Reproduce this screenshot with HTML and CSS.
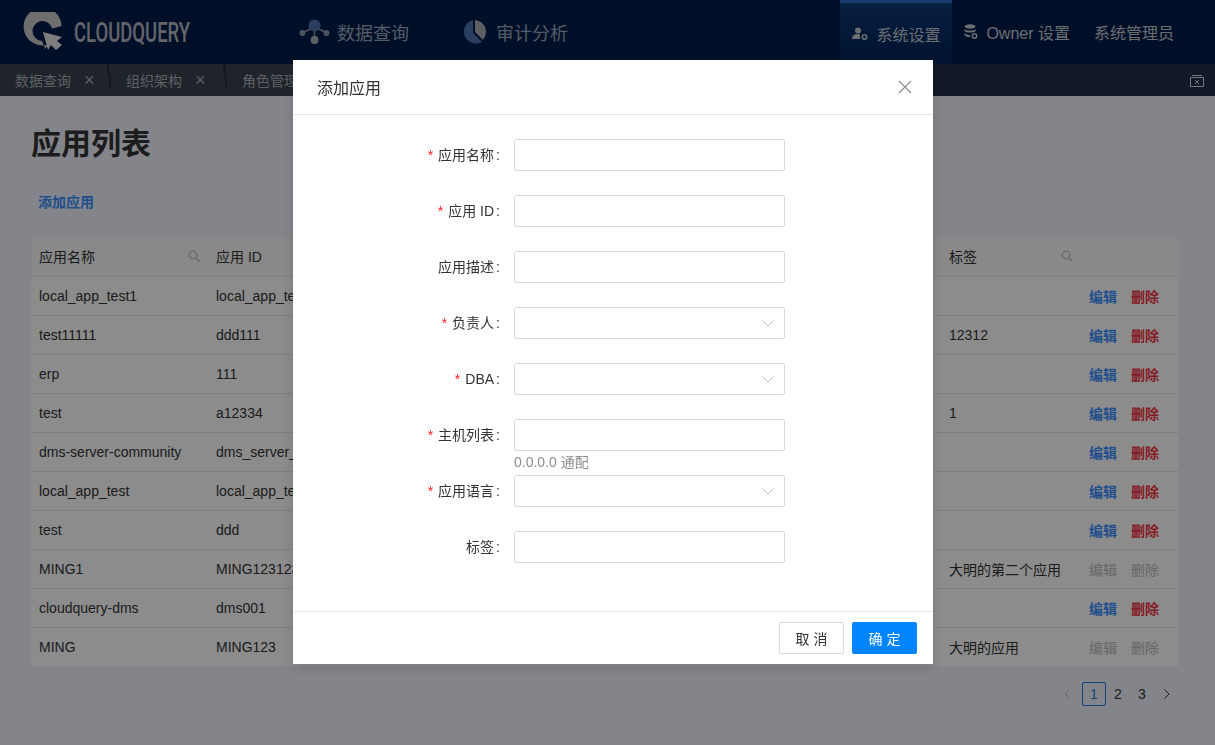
FILE: index.html
```html
<!DOCTYPE html>
<html lang="zh-CN">
<head>
  <meta charset="UTF-8">
  <title>应用列表 - CloudQuery</title>
  <link rel="stylesheet" href="styles.css">
</head>
<body>
  <header class="topbar">
    <div class="brand">
      <svg class="brand-icon" width="40" height="40" viewBox="0 0 40 40">
        <path d="M33 28 A19 19 0 1 1 38.6 14 L29.2 16.6 A10 10 0 1 0 19 29 L22 36 A19 19 0 0 1 20 38" fill="#c9c9c9"/>
        <path d="M20 20 L39 25 L34 29 L39 33 L33 38 L28 33 L25 38 Z" fill="#e4e4e4"/>
      </svg>
      <span class="brand-name">CLOUDQUERY</span>
    </div>
    <nav class="main-nav">
      <a class="main-link">
        <svg width="31" height="26" viewBox="0 0 31 26">
          <path d="M15.5 8 L5 13 M15.5 8 L26 13 M15.5 8 V20" stroke="#8b97ab" stroke-width="1.5"/>
          <circle cx="15.5" cy="6.5" r="6" fill="#4d74ad"/>
          <circle cx="3.5" cy="14" r="3" fill="#8b97ab"/>
          <circle cx="27.5" cy="14" r="3" fill="#8b97ab"/>
          <circle cx="15.5" cy="21" r="4" fill="#a9adb5"/>
        </svg>
        数据查询
      </a>
      <a class="main-link">
        <svg width="26" height="26" viewBox="0 0 26 26">
          <path d="M12 1 V14 L21 23 A12 12 0 1 1 12 1 Z" fill="#4d74ad"/>
          <path d="M14 1 A12 12 0 0 1 25 13 A12 12 0 0 1 22 21 L14 13 Z" fill="#a9adb5"/>
        </svg>
        审计分析
      </a>
    </nav>
    <nav class="side-nav">
      <a class="side-link is-active">
        <svg width="16" height="14" viewBox="0 0 16 14">
          <circle cx="6" cy="3.5" r="3" fill="#c3c7ce"/>
          <path d="M0 12 C0 8 3 7 6 7 C7.5 7 8 7.5 8 8 V12 Z" fill="#c3c7ce"/>
          <circle cx="12.5" cy="10" r="2.2" fill="none" stroke="#c3c7ce" stroke-width="1.6"/>
        </svg>
        系统设置
      </a>
      <a class="side-link">
        <svg width="14" height="16" viewBox="0 0 14 16">
          <ellipse cx="6" cy="2.5" rx="5.5" ry="2.2" fill="#c3c7ce"/>
          <path d="M.5 5 C2 7 10 7 11.5 5 V7 C10 9 2 9 .5 7 Z M.5 9 C2 11 5 11 6 11 V13 C4 13 2 13 .5 11 Z" fill="#c3c7ce"/>
          <circle cx="10.5" cy="12" r="2.2" fill="none" stroke="#c3c7ce" stroke-width="1.6"/>
        </svg>
        Owner 设置
      </a>
      <a class="side-link">系统管理员</a>
    </nav>
  </header>

  <div class="tabbar">
    <div class="tab">数据查询<span class="tab-x">×</span></div>
    <div class="tab">组织架构<span class="tab-x">×</span></div>
    <div class="tab tab-last">角色管理<span class="tab-x">×</span></div>
    <svg class="tab-close" width="14" height="13" viewBox="0 0 14 13">
      <path d="M2 1.5 H12 M.5 3.5 H13.5 V12.5 H.5 Z M5 6 L9 10 M9 6 L5 10" fill="none" stroke="#d5d9e0"/>
    </svg>
  </div>

  <main class="page">
    <h1 class="page-title">应用列表</h1>
    <a class="add-link">添加应用</a>
    <table class="app-table">
      <colgroup>
        <col class="col-name">
        <col class="col-id">
        <col>
        <col class="col-tag">
        <col class="col-actions">
      </colgroup>
      <thead>
        <tr>
          <th>应用名称<svg class="search-icon" width="12" height="12" viewBox="0 0 12 12"><circle cx="5" cy="5" r="3.8" fill="none" stroke="#bbb" stroke-width="1.2"/><path d="M8 8 L11.5 11.5" stroke="#bbb" stroke-width="1.4"/></svg></th>
          <th>应用 ID</th>
          <th></th>
          <th>标签<svg class="search-icon" width="12" height="12" viewBox="0 0 12 12"><circle cx="5" cy="5" r="3.8" fill="none" stroke="#bbb" stroke-width="1.2"/><path d="M8 8 L11.5 11.5" stroke="#bbb" stroke-width="1.4"/></svg></th>
          <th></th>
        </tr>
      </thead>
      <tbody>
        <tr><td>local_app_test1</td><td>local_app_test1</td><td></td><td></td><td><a class="act-edit">编辑</a><a class="act-del">删除</a></td></tr>
        <tr><td>test11111</td><td>ddd111</td><td></td><td>12312</td><td><a class="act-edit">编辑</a><a class="act-del">删除</a></td></tr>
        <tr><td>erp</td><td>111</td><td></td><td></td><td><a class="act-edit">编辑</a><a class="act-del">删除</a></td></tr>
        <tr><td>test</td><td>a12334</td><td></td><td>1</td><td><a class="act-edit">编辑</a><a class="act-del">删除</a></td></tr>
        <tr><td>dms-server-community</td><td>dms_server_community</td><td></td><td></td><td><a class="act-edit">编辑</a><a class="act-del">删除</a></td></tr>
        <tr><td>local_app_test</td><td>local_app_test</td><td></td><td></td><td><a class="act-edit">编辑</a><a class="act-del">删除</a></td></tr>
        <tr><td>test</td><td>ddd</td><td></td><td></td><td><a class="act-edit">编辑</a><a class="act-del">删除</a></td></tr>
        <tr><td>MING1</td><td>MING123123</td><td></td><td>大明的第二个应用</td><td><a class="act-off">编辑</a><a class="act-off">删除</a></td></tr>
        <tr><td>cloudquery-dms</td><td>dms001</td><td></td><td></td><td><a class="act-edit">编辑</a><a class="act-del">删除</a></td></tr>
        <tr><td>MING</td><td>MING123</td><td></td><td>大明的应用</td><td><a class="act-off">编辑</a><a class="act-off">删除</a></td></tr>
      </tbody>
    </table>
    <div class="pager">
      <svg class="pager-arrow is-off" width="8" height="10" viewBox="0 0 8 10"><path d="M6.5 .5 L2 5 L6.5 9.5" fill="none" stroke="currentColor"/></svg>
      <span class="pager-num is-current">1</span>
      <span class="pager-num">2</span>
      <span class="pager-num">3</span>
      <svg class="pager-arrow" width="8" height="10" viewBox="0 0 8 10"><path d="M1.5 .5 L6 5 L1.5 9.5" fill="none" stroke="currentColor"/></svg>
    </div>
  </main>

  <div class="mask">
    <div class="modal">
      <div class="modal-head">
        <span>添加应用</span>
        <svg width="14" height="14" viewBox="0 0 14 14"><path d="M1 1 L13 13 M13 1 L1 13" stroke="#8c8c8c" stroke-width="1.2"/></svg>
      </div>
      <form class="modal-body">
        <div class="field"><label class="is-required">应用名称</label><div class="control"><input type="text"></div></div>
        <div class="field"><label class="is-required">应用 ID</label><div class="control"><input type="text"></div></div>
        <div class="field"><label>应用描述</label><div class="control"><input type="text"></div></div>
        <div class="field"><label class="is-required">负责人</label><div class="control select"><svg width="12" height="7" viewBox="0 0 12 7"><path d="M.5 .5 L6 6 L11.5 .5" fill="none" stroke="#bfbfbf"/></svg></div></div>
        <div class="field"><label class="is-required">DBA</label><div class="control select"><svg width="12" height="7" viewBox="0 0 12 7"><path d="M.5 .5 L6 6 L11.5 .5" fill="none" stroke="#bfbfbf"/></svg></div></div>
        <div class="field"><label class="is-required">主机列表</label><div class="control"><input type="text"><p class="field-help">0.0.0.0 通配</p></div></div>
        <div class="field"><label class="is-required">应用语言</label><div class="control select"><svg width="12" height="7" viewBox="0 0 12 7"><path d="M.5 .5 L6 6 L11.5 .5" fill="none" stroke="#bfbfbf"/></svg></div></div>
        <div class="field"><label>标签</label><div class="control"><input type="text"></div></div>
      </form>
      <div class="modal-foot">
        <button class="btn" type="button">取 消</button>
        <button class="btn btn-primary" type="button">确 定</button>
      </div>
    </div>
  </div>
</body>
</html>
```

FILE: styles.css
```css
* {
  box-sizing: border-box;
  margin: 0;
  padding: 0;
}

html, body {
  height: 100%;
  overflow: hidden;
}

body {
  font-family: "Liberation Sans", "Noto Sans CJK SC", sans-serif;
  font-size: 14px;
  color: #333;
  background: #f0f3fb;
}

/* top bar */
.topbar {
  height: 64px;
  display: flex;
  background: #001d4a;
  color: #c3c7ce;
}

.brand {
  width: 299px;
  padding-left: 23px;
  display: flex;
  align-items: center;
}

.brand-icon {
  flex: none;
  margin-top: 0;
}

.brand-name {
  display: inline-block;
  width: 111px;
  margin-left: 11px;
  font-family: Roboto, sans-serif;
  font-size: 28px;
  font-weight: 500;
  color: #b4b9c0;
  transform: scaleX(.66);
  transform-origin: left center;
}

.main-nav {
  display: flex;
  gap: 52px;
}

.main-link {
  display: flex;
  align-items: center;
  gap: 7px;
  font-size: 18px;
  color: #9ba7bb;
}

.main-link + .main-link {
  gap: 9px;
}

.side-nav {
  margin-left: auto;
  margin-right: 30px;
  display: flex;
}

.side-link {
  display: flex;
  align-items: center;
  gap: 8px;
  padding: 0 12px;
  font-size: 16px;
}

.side-link.is-active {
  background: linear-gradient(#0f3a78, #002255);
  border-top: 3px solid #2f6fd0;
}

.side-link:last-child {
  padding-right: 11px;
}

/* tabs */
.tabbar {
  height: 32px;
  display: flex;
  align-items: center;
  background: #1f2d4a;
  color: #a8adb6;
}

.tab {
  height: 32px;
  display: flex;
  align-items: center;
  padding-left: 15px;
  width: 111px;
  background: #39434f;
  position: relative;
}

.tab + .tab {
  width: 116px;
  padding-left: 15px;
}

.tab-last {
  padding-left: 20px;
  width: 200px;
}

.tab::after {
  content: "";
  position: absolute;
  right: 0;
  top: 0;
  bottom: 0;
  width: 2px;
  background: #242b36;
  transform: skewX(8deg);
}

.tab-x {
  margin-left: 13px;
  font-size: 18px;
  font-weight: 300;
}

.tab-close {
  margin-left: auto;
  margin-right: 11px;
}

/* page */
.page {
  padding: 0 36px 0 31px;
}

.page-title {
  margin-top: 28px;
  font-size: 30px;
  line-height: 40px;
  font-weight: 700;
  color: #333;
}

.add-link {
  display: block;
  margin: 28px 0 0 7px;
  height: 20px;
  line-height: 20px;
  font-weight: 700;
  color: #3a8fff;
}

.app-table {
  width: 1148px;
  margin-top: 25px;
  table-layout: fixed;
  border-collapse: collapse;
  background: #fff;
}

.col-name,
.col-id {
  width: 177px;
}

.col-tag {
  width: 140px;
}

.col-actions {
  width: 98px;
}

.app-table th,
.app-table td {
  height: 39px;
  padding: 0 8px;
  text-align: left;
  font-weight: 400;
  white-space: nowrap;
  overflow: hidden;
  border-bottom: 1px solid #e8e8e8;
}

.app-table th {
  background: #fafafa;
  position: relative;
}

.app-table tr:last-child td {
  border-bottom: 0;
}

.search-icon {
  position: absolute;
  right: 8px;
  top: 13px;
}

.act-edit,
.act-del,
.act-off {
  font-weight: 700;
  margin-right: 14px;
}

.act-edit {
  color: #3a8fff;
}

.act-del {
  color: #f5303f;
}

.act-off {
  font-weight: 400;
  color: #bbb;
}

.pager {
  margin-top: 16px;
  display: flex;
  justify-content: flex-end;
  align-items: center;
  width: 1148px;
  padding-right: 8px;
  color: #333;
}

.pager-arrow {
  color: #333;
}

.pager-arrow.is-off {
  color: #bbb;
  margin-right: 11px;
}

.pager-num {
  width: 24px;
  height: 24px;
  line-height: 22px;
  text-align: center;
  border: 1px solid transparent;
  border-radius: 2px;
}

.pager-num.is-current {
  color: #1f7fe8;
  border-color: #1f7fe8;
}

.pager-num:nth-of-type(3) {
  margin-right: 9px;
}

/* modal */
.mask {
  position: fixed;
  inset: 0;
  background: rgba(0, 0, 0, .45);
}

.modal {
  width: 640px;
  height: 604px;
  margin: 60px 0 0 293px;
  background: #fff;
  display: flex;
  flex-direction: column;
  box-shadow: 0 4px 12px rgba(0, 0, 0, .15);
}

.modal-head {
  height: 55px;
  padding: 0 21px 0 24px;
  display: flex;
  align-items: center;
  justify-content: space-between;
  font-size: 16px;
  color: #333;
  border-bottom: 1px solid #e8e8e8;
}

.modal-body {
  flex: 1;
  padding-top: 24px;
}

.field {
  height: 56px;
  display: flex;
}

.field label {
  width: 214px;
  height: 32px;
  line-height: 32px;
  text-align: right;
  color: #333;
}

.field label::after {
  content: ":";
  margin: 0 7px 0 2px;
}

.is-required::before {
  content: "*";
  margin-right: 5px;
  color: #f5222d;
  font-family: "Liberation Sans", sans-serif;
}

.control {
  width: 271px;
  height: 32px;
  margin-left: 7px;
}

.control input {
  display: block;
  width: 100%;
  height: 32px;
  border: 1px solid #d9d9d9;
  border-radius: 2px;
  background: #fff;
}

.select {
  border: 1px solid #d9d9d9;
  border-radius: 2px;
  display: flex;
  align-items: center;
  justify-content: flex-end;
  padding-right: 10px;
}

.field-help {
  line-height: 22px;
  color: #8c8c8c;
}

.modal-foot {
  height: 53px;
  padding: 10px 16px 0 0;
  display: flex;
  justify-content: flex-end;
  gap: 8px;
  border-top: 1px solid #e8e8e8;
}

.btn {
  width: 65px;
  height: 32px;
  border: 1px solid #d9d9d9;
  border-radius: 2px;
  background: #fff;
  font-family: inherit;
  font-size: 14px;
  color: #333;
}

.btn-primary {
  border-color: #0084ff;
  background: #0084ff;
  color: #fff;
}
```
